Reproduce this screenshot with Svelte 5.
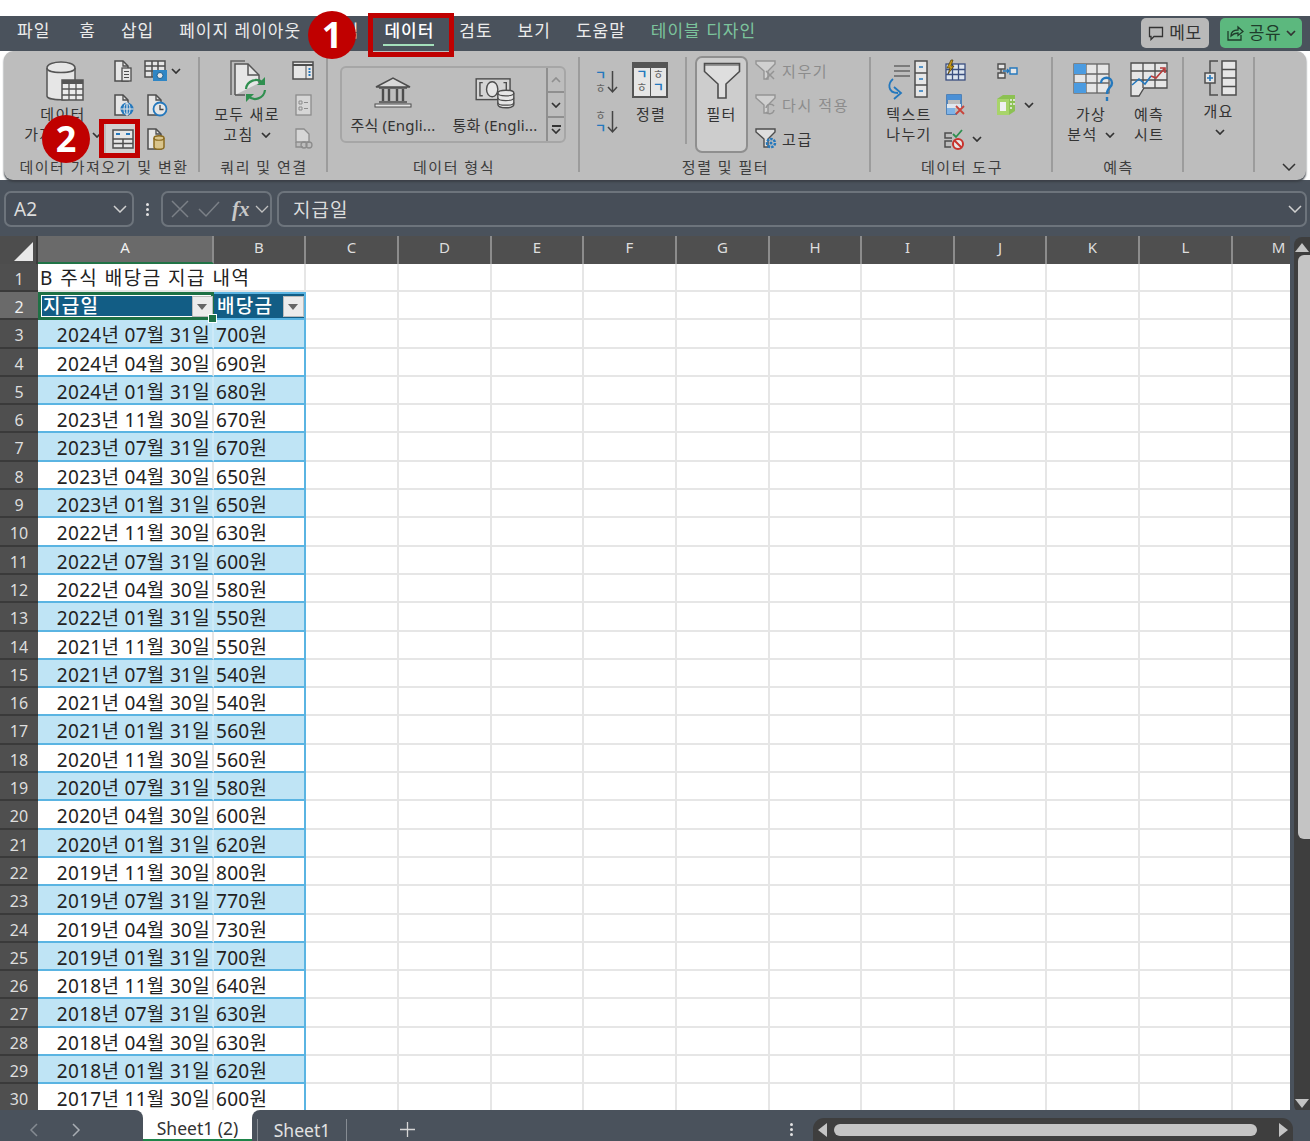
<script>
  // Excel data tab screenshot: ribbon, formula bar, sheet grid and tab strip
  const tabs = ['파일', '홈', '삽입', '페이지 레이아웃', '수식', '데이터', '검토', '보기', '도움말', '테이블 디자인']
  const columns = ['A', 'B', 'C', 'D', 'E', 'F', 'G', 'H', 'I', 'J', 'K', 'L', 'M']
  const emptyColumns = columns.slice(2)

  const payments = [
    ['2024년 07월 31일', '700원'], ['2024년 04월 30일', '690원'], ['2024년 01월 31일', '680원'],
    ['2023년 11월 30일', '670원'], ['2023년 07월 31일', '670원'], ['2023년 04월 30일', '650원'],
    ['2023년 01월 31일', '650원'], ['2022년 11월 30일', '630원'], ['2022년 07월 31일', '600원'],
    ['2022년 04월 30일', '580원'], ['2022년 01월 31일', '550원'], ['2021년 11월 30일', '550원'],
    ['2021년 07월 31일', '540원'], ['2021년 04월 30일', '540원'], ['2021년 01월 31일', '560원'],
    ['2020년 11월 30일', '560원'], ['2020년 07월 31일', '580원'], ['2020년 04월 30일', '600원'],
    ['2020년 01월 31일', '620원'], ['2019년 11월 30일', '800원'], ['2019년 07월 31일', '770원'],
    ['2019년 04월 30일', '730원'], ['2019년 01월 31일', '700원'], ['2018년 11월 30일', '640원'],
    ['2018년 07월 31일', '630원'], ['2018년 04월 30일', '630원'], ['2018년 01월 31일', '620원'],
    ['2017년 11월 30일', '600원']
  ]
</script>

{#snippet chev()}
  <svg class="chev" width="10" height="6" viewBox="0 0 10 6"><path d="M1 1l4 4 4-4" fill="none" stroke="#333" stroke-width="1.7"/></svg>
{/snippet}

{#snippet page(x = 0, y = 0)}
  <path transform="translate({x} {y})" d="M1 1h8l5 5v15H1z" fill="#e6e6e6" stroke="#4d4d4d" stroke-width="1.5"/>
  <path transform="translate({x} {y})" d="M9 1v5h5" fill="none" stroke="#4d4d4d" stroke-width="1.3"/>
{/snippet}

{#snippet arrow()}
  <svg class="sort-arrow" width="11" height="24" viewBox="0 0 11 24"><path d="M5.500 1v21M1 17l4.500 5 4.500-5" fill="none" stroke="#444" stroke-width="1.500"/></svg>
{/snippet}

<div class="window">
  <nav class="tabs">
    {#each tabs as tab}
      <span class="tab" class:active={tab === '데이터'} class:context={tab === '테이블 디자인'}>{tab}</span>
    {/each}
    <div class="tab-actions">
      <button class="memo">
        <svg width="16" height="16" viewBox="0 0 16 16"><path d="M1.5 2.5h13v9H6l-3 3v-3H1.5z" fill="none" stroke="#333" stroke-width="1.3"/></svg>
        메모
      </button>
      <button class="share">
        <svg width="18" height="18" viewBox="0 0 18 18"><path d="M2 7v9h13v-5M5 12c0-4 3-6 7-6V3l5 4.500-5 4V9c-3 0-5 1-7 3z" fill="none" stroke="#1f3d2b" stroke-width="1.3"/></svg>
        공유
        {@render chev()}
      </button>
    </div>
  </nav>

  <section class="ribbon">
    <div class="group g-import">
      <div class="body">
        <div class="big import-btn">
          <svg width="40" height="44" viewBox="0 0 40 44">
            <path d="M1 8c0-8 28-8 28 0v28c0 5-28 5-28 0z" fill="#e6e6e6" stroke="#555" stroke-width="1.5"/>
            <path d="M1 8c0 6 28 6 28 0" fill="none" stroke="#555" stroke-width="1.5"/>
            <rect x="16" y="20" width="21" height="20" fill="#ececec" stroke="#555" stroke-width="1.5"/>
            <path d="M16 20h21v4H16z" fill="#555"/>
            <path d="M23 24v16M30 24v16M16 29h21M16 35h21" stroke="#555" stroke-width="1.3"/>
          </svg>
          <span class="line">데이터</span>
          <span class="line">가져오기 {@render chev()}</span>
        </div>
        <div class="small-grid import-grid">
          <span class="cell">
            <svg width="24" height="24" viewBox="0 0 24 24">
              {@render page(3, 1)}
              <rect x="11" y="9" width="9" height="13" fill="#e6e6e6" stroke="#4d4d4d" stroke-width="1.3"/>
              <path d="M13 12.500h5M13 15.500h5M13 18.500h5" stroke="#4d4d4d"/>
            </svg>
          </span>
          <span class="cell wide">
            <svg width="26" height="24" viewBox="0 0 26 24">
              <rect x="2" y="2" width="20" height="16" fill="#e6e6e6" stroke="#4d4d4d" stroke-width="1.5"/>
              <path d="M2 7h20M2 12h20M9 2v16M15 2v16" stroke="#4d4d4d" stroke-width="1.5"/>
              <rect x="10" y="11" width="14" height="11" fill="#2f86c5"/>
              <circle cx="17" cy="16.500" r="3" fill="#e6e6e6" stroke="#1d5f90"/>
            </svg>
            {@render chev()}
          </span>
          <span class="cell">
            <svg width="24" height="24" viewBox="0 0 24 24">
              {@render page(3, 1)}
              <circle cx="16" cy="16" r="6.500" fill="#2478bd"/>
              <path d="M9.500 16h13M16 9.500v13" stroke="#e8e8e8" stroke-width="1.200"/>
              <ellipse cx="16" cy="16" rx="3" ry="6" fill="none" stroke="#e8e8e8"/>
            </svg>
          </span>
          <span class="cell">
            <svg width="24" height="24" viewBox="0 0 24 24">
              {@render page(3, 1)}
              <circle cx="16" cy="16" r="6.500" fill="#e6e6e6" stroke="#2478bd" stroke-width="1.800"/>
              <path d="M16 12v4.500h3.500" fill="none" stroke="#444" stroke-width="1.300"/>
            </svg>
          </span>
          <span class="cell picked">
            <svg width="24" height="24" viewBox="0 0 24 24">
              <rect x="2" y="3" width="20" height="18" fill="#e6e6e6" stroke="#4d4d4d" stroke-width="1.5"/>
              <path d="M2 12h20M2 16.500h20M12 12v9" stroke="#4d4d4d" stroke-width="1.5"/>
              <path d="M5 7h4M15 7h4" stroke="#2478bd" stroke-width="2"/>
            </svg>
          </span>
          <span class="cell">
            <svg width="24" height="24" viewBox="0 0 24 24">
              {@render page(3, 1)}
              <path d="M10 11c0-3 10-3 10 0v9c0 3-10 3-10 0z" fill="#d9c48c" stroke="#8a6a1e" stroke-width="1.500"/>
              <path d="M10 11c0 3 10 3 10 0" fill="none" stroke="#8a6a1e" stroke-width="1.200"/>
            </svg>
          </span>
        </div>
      </div>
      <div class="group-label">데이터 가져오기 및 변환</div>
    </div>

    <div class="group g-query">
      <div class="body">
        <div class="big refresh-btn">
          <svg width="44" height="44" viewBox="0 0 44 44">
            <path d="M3 36V2h14" fill="none" stroke="#666" stroke-width="1.500"/>
            <path d="M7 36V5h13l11 11v8" fill="#e6e6e6" stroke="#555" stroke-width="1.500"/>
            <path d="M7 36h10" stroke="#555" stroke-width="1.500"/>
            <path d="M20 5v11h11" fill="none" stroke="#555" stroke-width="1.500"/>
            <path d="M18 30a10 10 0 0 1 17-6M37 31a10 10 0 0 1-17 6" fill="none" stroke="#2f8f4f" stroke-width="2.200"/>
            <path d="M37 18v8h-8zM18 43v-8h8z" fill="#2f8f4f"/>
          </svg>
          <span class="line">모두 새로</span>
          <span class="line">고침 {@render chev()}</span>
        </div>
        <div class="small-col">
          <span class="cell">
            <svg width="24" height="24" viewBox="0 0 24 24">
              <rect x="2" y="3" width="20" height="17" fill="#e6e6e6" stroke="#4d4d4d" stroke-width="1.500"/>
              <path d="M2 6h20" stroke="#4d4d4d" stroke-width="2"/>
              <path d="M15 6v14" stroke="#4d4d4d"/>
              <path d="M18.500 9v8" stroke="#2478bd" stroke-width="2" stroke-dasharray="2 1"/>
            </svg>
          </span>
          <span class="cell">
            <svg width="24" height="24" viewBox="0 0 24 24">
              <rect x="5" y="2" width="15" height="20" fill="#d6d6d6" stroke="#8c8c8c" stroke-width="1.300"/>
              <path d="M8 8h3v3H8zM8 14h3v3H8zM13 9.500h4M13 15.500h4" fill="none" stroke="#8c8c8c"/>
            </svg>
          </span>
          <span class="cell">
            <svg width="24" height="24" viewBox="0 0 24 24">
              <path d="M5 2h8l5 5v8H5z" fill="#d6d6d6" stroke="#8c8c8c" stroke-width="1.300"/>
              <path d="M5 15v5h7" fill="none" stroke="#8c8c8c" stroke-width="1.300"/>
              <circle cx="13" cy="18" r="3" fill="none" stroke="#8c8c8c" stroke-width="1.300"/>
              <circle cx="18" cy="18" r="3" fill="none" stroke="#8c8c8c" stroke-width="1.300"/>
            </svg>
          </span>
        </div>
      </div>
      <div class="group-label">쿼리 및 연결</div>
    </div>

    <div class="group g-types">
      <div class="body">
        <div class="gallery">
          <div class="gallery-item">
            <svg width="38" height="32" viewBox="0 0 38 32">
              <path d="M2 10L19 1l17 9z" fill="#d9d9d9" stroke="#4d4d4d" stroke-width="1.500"/>
              <path d="M5 11h28M5 25h28" stroke="#4d4d4d" stroke-width="1.500"/>
              <path d="M9 12v12M15 12v12M23 12v12M29 12v12" stroke="#4d4d4d" stroke-width="2.400"/>
              <rect x="1" y="27" width="36" height="3" fill="#e6e6e6" stroke="#4d4d4d"/>
            </svg>
            <span>주식 (Engli...</span>
          </div>
          <div class="gallery-item">
            <svg width="42" height="34" viewBox="0 0 42 34">
              <rect x="1" y="2" width="36" height="22" fill="#d4d4d4" stroke="#4d4d4d" stroke-width="1.500"/>
              <ellipse cx="18" cy="13" rx="6" ry="8" fill="#e6e6e6" stroke="#4d4d4d" stroke-width="1.500"/>
              <path d="M8 6H5v14h3M30 6h3v14h-3" fill="none" stroke="#4d4d4d" stroke-width="1.500"/>
              <path d="M24 17c0-4 17-4 17 0v12c0 5-17 5-17 0z" fill="#e6e6e6" stroke="#4d4d4d" stroke-width="1.500"/>
              <path d="M24 17c0 4 17 4 17 0M24 22c0 4 17 4 17 0M24 27c0 4 17 4 17 0" fill="none" stroke="#4d4d4d" stroke-width="1.300"/>
            </svg>
            <span>통화 (Engli...</span>
          </div>
          <div class="gallery-btns">
            <span class="off"><svg width="10" height="6" viewBox="0 0 10 6"><path d="M1 5l4-4 4 4" fill="none" stroke="#8f8f8f" stroke-width="1.700"/></svg></span>
            <span>{@render chev()}</span>
            <span class="more"><i></i>{@render chev()}</span>
          </div>
        </div>
      </div>
      <div class="group-label">데이터 형식</div>
    </div>

    <div class="group g-sort">
      <div class="body">
        <div class="sort-col">
          <span class="sort-mini"><span class="stack"><span class="blue">ㄱ</span><span>ㅎ</span></span>{@render arrow()}</span>
          <span class="sort-mini"><span class="stack"><span>ㅎ</span><span class="blue">ㄱ</span></span>{@render arrow()}</span>
        </div>
        <div class="big sort-btn">
          <div class="sort-big">
            <span><i class="blue">ㄱ</i><i>ㅎ</i></span>
            <span><i>ㅎ</i><i class="blue">ㄱ</i></span>
          </div>
          <span class="line">정렬</span>
        </div>
        <i class="divider"></i>
        <div class="big filter-btn">
          <svg width="38" height="38" viewBox="0 0 38 38">
            <path d="M1.500 1.500h35v8L23 22v14h-8V22L1.500 9.500z" fill="#dedede" stroke="#4d4d4d" stroke-width="1.600"/>
            <path d="M2 3h34" stroke="#4d4d4d"/>
          </svg>
          <span class="line">필터</span>
        </div>
        <div class="filter-list">
          <span class="row off">
            <svg width="24" height="24" viewBox="0 0 24 24">
              <path d="M2 3h19v3l-7 7v8h-4v-8L2 6z" fill="#d0d0d0" stroke="#949494" stroke-width="1.400"/>
              <path d="M12 13l8 8M20 13l-8 8" stroke="#949494" stroke-width="1.500"/>
            </svg>
            지우기
          </span>
          <span class="row off">
            <svg width="24" height="24" viewBox="0 0 24 24">
              <path d="M2 3h19v3l-7 7v8h-4v-8L2 6z" fill="#d0d0d0" stroke="#949494" stroke-width="1.400"/>
              <path d="M12 16a4.500 4.500 0 0 1 8-2M20 18a4.500 4.500 0 0 1-8 2" fill="none" stroke="#949494" stroke-width="1.500"/>
            </svg>
            다시 적용
          </span>
          <span class="row">
            <svg width="24" height="24" viewBox="0 0 24 24">
              <path d="M2 3h19v3l-7 7v8h-4v-8L2 6z" fill="#dedede" stroke="#4d4d4d" stroke-width="1.400"/>
              <circle cx="17" cy="17" r="4" fill="none" stroke="#2478bd" stroke-width="2.500" stroke-dasharray="2.500 1"/>
              <circle cx="17" cy="17" r="1.500" fill="#2478bd"/>
            </svg>
            고급
          </span>
        </div>
      </div>
      <div class="group-label">정렬 및 필터</div>
    </div>

    <div class="group g-tools">
      <div class="body">
        <div class="big split-btn">
          <svg width="46" height="42" viewBox="0 0 46 42">
            <path d="M8 6h16M8 11h16M8 16h16" stroke="#666" stroke-width="1.300"/>
            <rect x="29" y="1" width="12" height="36" fill="#e6e6e6" stroke="#4d4d4d" stroke-width="1.500"/>
            <path d="M29 13h12M29 25h12" stroke="#4d4d4d" stroke-width="1.500"/>
            <path d="M33 7h4M33 19h4M33 31h4" stroke="#2478bd" stroke-width="1.600"/>
            <path d="M7 19C2 23 1 33 12 33M8 27l7 6-7 6" fill="none" stroke="#2478bd" stroke-width="1.800"/>
          </svg>
          <span class="line">텍스트</span>
          <span class="line">나누기</span>
        </div>
        <div class="small-grid tools-grid">
          <span class="cell">
            <svg width="24" height="24" viewBox="0 0 24 24">
              <rect x="3" y="5" width="19" height="16" fill="#dce4ee" stroke="#3b4f80" stroke-width="1.300"/>
              <path d="M3 10.500h19M3 15.500h19M9.500 5v16M15.500 5v16" stroke="#3b4f80" stroke-width="1.300"/>
              <path d="M8 1L4 9h3l-2 6 6-8H8l2-6z" fill="#c79a1c" stroke="#4d3a00" stroke-width=".7"/>
            </svg>
          </span>
          <span class="cell">
            <svg width="24" height="24" viewBox="0 0 24 24">
              <path d="M4 16v5h10M4 16V2h14v12" fill="none" stroke="#2c6fb5" stroke-width="1.500"/>
              <rect x="4" y="2" width="14" height="5" fill="#4b90d6"/>
              <rect x="4" y="11" width="14" height="4" fill="#dfe7ef"/>
              <rect x="4" y="15" width="8" height="6" fill="#7fb3e6"/>
              <path d="M13 13l8 8M21 13l-8 8" stroke="#c8443c" stroke-width="1.800"/>
            </svg>
          </span>
          <span class="cell wide">
            <svg width="24" height="24" viewBox="0 0 24 24">
              <path d="M10 6H3v5h7M10 14H3v6h6" fill="none" stroke="#4d4d4d" stroke-width="1.500"/>
              <path d="M11 7l3 3 6-7" fill="none" stroke="#2f8f4f" stroke-width="1.800"/>
              <circle cx="16" cy="17" r="5" fill="#e6e6e6" stroke="#c8322c" stroke-width="2"/>
              <path d="M12.500 13.500l7 7" stroke="#c8322c" stroke-width="2"/>
            </svg>
            {@render chev()}
          </span>
        </div>
        <div class="small-col tools-col">
          <span class="cell">
            <svg width="24" height="24" viewBox="0 0 24 24">
              <path d="M3 5h7v5H3zM3 14h7v5H3z" fill="#e6e6e6" stroke="#4d4d4d" stroke-width="1.400"/>
              <path d="M6 10v4" stroke="#4d4d4d" stroke-width="1.400"/>
              <path d="M8 12h6M12 10l2 2-2 2" fill="none" stroke="#2478bd" stroke-width="1.300"/>
              <path d="M15 9h7v6h-7z" fill="#e6e6e6" stroke="#2478bd" stroke-width="1.400"/>
            </svg>
          </span>
          <span class="cell wide">
            <svg width="24" height="24" viewBox="0 0 24 24">
              <path d="M3 6l6-4h12v16l-6 4H3z" fill="#8cc152"/>
              <path d="M3 6h12v16H3z" fill="#a8d46a"/>
              <rect x="6" y="9" width="6" height="9" fill="#f0f0f0"/>
              <path d="M17 6v2M20 6v2M17 10v2M20 10v2M17 14v2" stroke="#f0f0f0" stroke-width="1.500"/>
            </svg>
            {@render chev()}
          </span>
        </div>
      </div>
      <div class="group-label">데이터 도구</div>
    </div>

    <div class="group g-forecast">
      <div class="body">
        <div class="big whatif-btn">
          <svg width="42" height="42" viewBox="0 0 42 42">
            <rect x="1" y="2" width="35" height="29" fill="#e6e6e6" stroke="#666" stroke-width="1.300"/>
            <path d="M13 2v29M24 2v29M1 12h35M1 21h35" stroke="#666" stroke-width="1.300"/>
            <rect x="1" y="2" width="12" height="10" fill="#4b9be0"/>
            <rect x="1" y="21" width="12" height="10" fill="#4b9be0"/>
            <path d="M28 21c0-7 11-7 11 0 0 5-5 4-5 11" fill="none" stroke="#2478bd" stroke-width="2.400"/>
            <path d="M34 35v4" stroke="#2478bd" stroke-width="2.400"/>
          </svg>
          <span class="line">가상</span>
          <span class="line">분석 {@render chev()}</span>
        </div>
        <div class="big forecast-btn">
          <svg width="38" height="36" viewBox="0 0 38 36">
            <path d="M1 1h36v25H14l-5 8H1z" fill="#e6e6e6" stroke="#4d4d4d" stroke-width="1.300"/>
            <path d="M13 1v25M25 1v25M1 9h36M1 18h36" stroke="#4d4d4d" stroke-width="1.300"/>
            <path d="M2 23l7-6 6 5 6-8" fill="none" stroke="#2478bd" stroke-width="1.600"/>
            <path d="M21 14l5 2 8-9M30 6h5v5" fill="none" stroke="#b83a3a" stroke-width="1.600"/>
          </svg>
          <span class="line">예측</span>
          <span class="line">시트</span>
        </div>
      </div>
      <div class="group-label">예측</div>
    </div>

    <div class="group g-outline">
      <div class="body">
        <div class="big outline-btn">
          <svg width="34" height="36" viewBox="0 0 34 36">
            <path d="M14 1H6v12M6 23v12h8" fill="none" stroke="#4d4d4d" stroke-width="1.500"/>
            <rect x="1" y="13" width="10" height="10" fill="#e6e6e6" stroke="#4d4d4d" stroke-width="1.500"/>
            <path d="M6 15v6M3 18h6" stroke="#2478bd" stroke-width="1.600"/>
            <rect x="18" y="1" width="14" height="34" fill="#e6e6e6" stroke="#4d4d4d" stroke-width="1.500"/>
            <path d="M18 9.500h14M18 18h14M18 26.500h14" stroke="#4d4d4d" stroke-width="1.500"/>
          </svg>
          <span class="line">개요</span>
          <span class="line">{@render chev()}</span>
        </div>
      </div>
    </div>

    <button class="collapse" aria-label="리본 축소">
      <svg width="14" height="8" viewBox="0 0 14 8"><path d="M1 1l6 6 6-6" fill="none" stroke="#333" stroke-width="1.500"/></svg>
    </button>
  </section>

  <div class="formula-bar">
    <div class="name-box">A2
      <svg width="14" height="8" viewBox="0 0 14 8"><path d="M1 1l6 6 6-6" fill="none" stroke="#d0d0d0" stroke-width="1.500"/></svg>
    </div>
    <span class="grip"><i></i><i></i><i></i></span>
    <div class="fx-box">
      <svg width="20" height="20" viewBox="0 0 20 20"><path d="M2 2l16 16M18 2L2 18" stroke="#7b8087" stroke-width="1.500"/></svg>
      <svg width="22" height="20" viewBox="0 0 22 20"><path d="M1 10l7 7L21 3" fill="none" stroke="#7b8087" stroke-width="1.500"/></svg>
      <span class="fx">fx</span>
      <svg width="14" height="8" viewBox="0 0 14 8"><path d="M1 1l6 6 6-6" fill="none" stroke="#c0c0c0" stroke-width="1.300"/></svg>
    </div>
    <div class="formula-input">지급일
      <svg width="14" height="8" viewBox="0 0 14 8"><path d="M1 1l6 6 6-6" fill="none" stroke="#d0d0d0" stroke-width="1.500"/></svg>
    </div>
  </div>

  <div class="workspace">
    <div class="sheet">
      <div class="corner"><i></i></div>
      {#each columns as col}
        <div class="col-head" class:sel={col === 'A'}>{col}</div>
      {/each}

      <div class="row-head">1</div>
      <div class="c title">B 주식 배당금 지급 내역</div>
      <div class="c"></div>
      {#each emptyColumns as col}<div class="c"></div>{/each}

      <div class="row-head sel">2</div>
      <div class="c th first">지급일<span class="drop"></span><i class="handle"></i></div>
      <div class="c th">배당금<span class="drop"></span></div>
      {#each emptyColumns as col}<div class="c"></div>{/each}

      {#each payments as [date, amount], i}
        <div class="row-head">{i + 3}</div>
        <div class="c date" class:band={i % 2 === 0}>{date}</div>
        <div class="c amount" class:band={i % 2 === 0}>{amount}</div>
        {#each emptyColumns as col}<div class="c"></div>{/each}
      {/each}
    </div>

    <div class="vscroll">
      <svg width="14" height="9" viewBox="0 0 14 9"><path d="M7 0l7 9H0z" fill="#c4c4c4"/></svg>
      <span class="vthumb"></span>
      <svg width="14" height="9" viewBox="0 0 14 9"><path d="M7 9l7-9H0z" fill="#c4c4c4"/></svg>
    </div>
  </div>

  <footer class="sheet-tabs">
    <div class="tab-nav">
      <svg width="10" height="14" viewBox="0 0 10 14"><path d="M8 1L2 7l6 6" fill="none" stroke="#858b92" stroke-width="1.500"/></svg>
      <svg width="10" height="14" viewBox="0 0 10 14"><path d="M2 1l6 6-6 6" fill="none" stroke="#a8adb3" stroke-width="1.500"/></svg>
    </div>
    <div class="sheet-active">Sheet1 (2)</div>
    <div class="tab-rest">
      <span class="sheet-other">Sheet1</span>
      <svg class="plus" width="15" height="15" viewBox="0 0 15 15"><path d="M7.500 0v15M0 7.500h15" stroke="#d6d6d6" stroke-width="1.300"/></svg>
      <span class="grip bottom"><i></i><i></i><i></i></span>
      <div class="hscroll">
        <svg width="9" height="14" viewBox="0 0 9 14"><path d="M0 7l9-7v14z" fill="#c4c4c4"/></svg>
        <span class="hthumb"></span>
        <svg width="9" height="14" viewBox="0 0 9 14"><path d="M9 7L0 0v14z" fill="#c4c4c4"/></svg>
      </div>
    </div>
  </footer>

  <!-- callouts drawn over the screenshot -->
  <span class="mark mark-tab"></span>
  <span class="mark mark-icon"></span>
  <span class="badge badge-1">1</span>
  <span class="badge badge-2">2</span>
</div>

<style>
  :global(body) {
    background: #fff;
    font-family: "Noto Sans", "Noto Sans CJK KR", sans-serif;
  }

  .window {
    position: relative;
    width: 1310px;
    height: 1141px;
    padding-top: 16px;
    box-sizing: border-box;
    overflow: hidden;
    display: flex;
    flex-direction: column;
  }

  .tabs {
    height: 35px;
    flex: none;
    display: flex;
    align-items: center;
    gap: 25px;
    padding: 0 8px 6px 17px;
    box-sizing: border-box;
    background: #4a525c;
    color: #ececec;
    font-size: 17px;
    line-height: 24px;
    letter-spacing: 1px;
  }

  .tab {
    position: relative;
    white-space: nowrap;
  }

  .tab:first-child {
    margin-right: 4px;
  }

  .tab.active {
    color: #fff;
    font-weight: 500;
  }

  .tab.active::after {
    content: '';
    position: absolute;
    left: -1px;
    right: 0;
    bottom: -3px;
    height: 2px;
    background: #a3dfbb;
  }

  .tab.context {
    color: #7cc49c;
  }

  .tab-actions {
    margin-left: auto;
    margin-top: 5px;
    display: flex;
    gap: 11px;
  }

  .tab-actions button {
    height: 30px;
    border: 0;
    border-radius: 5px;
    display: flex;
    align-items: center;
    justify-content: center;
    gap: 5px;
    padding: 0;
    font: inherit;
    letter-spacing: 0.6px;
    color: #333;
  }

  .memo {
    width: 68px;
    background: #b9b9b9;
  }

  .share {
    width: 82px;
    background: #5cb87e;
    color: #1f3d2b !important;
  }

  .ribbon {
    height: 129px;
    flex: none;
    margin: 0 4px;
    display: flex;
    background: #bdbdbd;
    border-radius: 9px;
    color: #333;
    font-size: 15px;
    box-shadow: 0 2px 2px #3b4047;
    position: relative;
  }

  .group {
    flex: none;
    display: flex;
    flex-direction: column;
    box-sizing: border-box;
    position: relative;
  }

  .group::after {
    content: '';
    position: absolute;
    right: 0;
    top: 6px;
    bottom: 8px;
    width: 2px;
    background: #9c9c9c;
  }

  .g-import { width: 196px; }
  .g-query { width: 128px; }
  .g-types { width: 252px; }
  .g-sort { width: 291px; }
  .g-tools { width: 182px; }
  .g-forecast { width: 131px; }
  .g-outline { width: 71px; height: 129px; }

  .g-import .group-label {
    padding-left: 4px;
  }

  .body {
    height: 105px;
    display: flex;
    padding-top: 3px;
    box-sizing: border-box;
    position: relative;
  }

  .group-label {
    height: 22px;
    line-height: 22px;
    text-align: center;
    white-space: nowrap;
    letter-spacing: 1.5px;
    color: #3d3d3d;
  }

  .big {
    flex: none;
    display: flex;
    flex-direction: column;
    align-items: center;
    white-space: nowrap;
  }

  .big > svg:first-child {
    flex: none;
    height: 44px;
    margin: 5px 0 1px;
  }

  .big .chev {
    margin: 0 0 2px 2px;
  }

  .line {
    height: 20px;
    line-height: 20px;
    letter-spacing: 1.300px;
  }

  .cell {
    display: flex;
    align-items: center;
    justify-content: center;
    height: 34px;
    width: 33px;
    position: relative;
  }

  .cell.wide {
    justify-content: flex-start;
    gap: 2px;
    padding-left: 4px;
    box-sizing: border-box;
  }

  .cell.wide svg {
    flex: none;
  }

  .g-tools .cell.wide {
    gap: 6px;
  }

  .small-grid {
    display: grid;
    grid-template-columns: 33px 33px;
    grid-auto-rows: 34px;
  }

  .small-col {
    display: flex;
    flex-direction: column;
  }

  .import-btn {
    width: 76px;
    margin: 0 5px 0 21px;
  }

  .import-btn > svg:first-child {
    margin: 6px 0 0 6px;
  }

  .picked {
    background: #d2d2d2;
  }

  .refresh-btn {
    width: 82px;
    margin: 0 -2px 0 6px;
  }

  .refresh-btn > svg:first-child {
    margin-left: 6px;
  }

  .gallery {
    width: 226px;
    height: 77px;
    margin: 12px 0 0 12px;
    border: 2px solid #a6a6a6;
    border-radius: 6px;
    box-sizing: border-box;
    display: flex;
    position: relative;
  }

  .gallery-item {
    flex: none;
    width: 102px;
    display: flex;
    flex-direction: column;
    align-items: center;
    padding-top: 9px;
    box-sizing: border-box;
    white-space: nowrap;
    gap: 5px;
    font-size: 15px;
    letter-spacing: 0.2px;
    line-height: 22px;
  }

  .gallery-item svg {
    height: 32px;
    flex: none;
  }

  .gallery-btns {
    margin-left: auto;
    width: 18px;
    display: flex;
    flex-direction: column;
    border-left: 2px solid #8f8f8f;
  }

  .gallery-btns span {
    flex: 1;
    display: flex;
    flex-direction: column;
    align-items: center;
    justify-content: center;
    border-bottom: 2px solid #8f8f8f;
  }

  .gallery-btns span:last-child {
    border-bottom: 0;
  }

  .gallery-btns i {
    width: 9px;
    height: 2px;
    background: #333;
    margin-bottom: 1px;
  }

  .sort-col {
    width: 52px;
    display: flex;
    flex-direction: column;
    gap: 6px;
    padding: 11px 0 0 15px;
    box-sizing: border-box;
  }

  .sort-mini {
    display: flex;
    align-items: center;
    height: 34px;
    font-size: 12px;
    line-height: 13px;
    color: #666;
  }

  .stack {
    display: flex;
    flex-direction: column;
    width: 12px;
  }

  .sort-arrow {
    flex: none;
  }

  .blue {
    color: #2478bd;
    font-weight: 700;
  }

  .sort-btn {
    width: 38px;
  }

  .sort-big {
    flex: none;
    width: 36px;
    height: 36px;
    margin: 8px 2px 6px 0;
    background: #e6e6e6;
    border: 2px solid #555;
    border-top-width: 6px;
    box-sizing: border-box;
    display: flex;
  }

  .sort-big span {
    flex: 1;
    display: flex;
    flex-direction: column;
    align-items: center;
    font-size: 12px;
    line-height: 13px;
    color: #666;
  }

  .sort-big span + span {
    border-left: 1px solid #555;
  }

  .sort-big i {
    font-style: normal;
  }

  .divider {
    width: 2px;
    height: 87px;
    margin: 3px 8px 0 15px;
    background: #9c9c9c;
    flex: none;
  }

  .filter-btn {
    width: 53px;
    height: 97px;
    margin-top: 2px;
    border: 2px solid #8f8f8f;
    border-radius: 7px;
    background: #cdcdcd;
    box-sizing: border-box;
  }

  .filter-btn > svg:first-child {
    height: 38px;
    margin: 4px 0;
  }

  .filter-list {
    display: flex;
    flex-direction: column;
    margin: -1px 0 0 6px;
  }

  .filter-list .row {
    height: 34px;
    display: flex;
    align-items: center;
    gap: 4px;
    white-space: nowrap;
    letter-spacing: 1.600px;
  }

  .filter-list .off {
    color: #8c8c8c;
  }

  .split-btn {
    width: 48px;
    margin: 0 1px 0 14px;
  }

  .split-btn > svg:first-child {
    height: 42px;
    margin: 6px 0 2px;
  }

  .tools-col {
    margin-left: 19px;
  }

  .tools-grid {
    grid-template-columns: 33px;
    margin-left: 4px;
  }

  .whatif-btn {
    width: 58px;
    margin-left: 9px;
  }

  .whatif-btn > svg:first-child {
    height: 42px;
    margin: 8px 0 0 6px;
  }

  .forecast-btn {
    width: 48px;
    margin-left: 5px;
  }

  .forecast-btn > svg:first-child {
    height: 36px;
    margin: 8px 0 6px;
  }

  .outline-btn {
    width: 71px;
    padding-right: 2px;
    box-sizing: border-box;
  }

  .outline-btn > svg:first-child {
    height: 36px;
    margin: 6px 0 5px 4px;
  }

  .collapse {
    margin: auto 10px 9px auto;
    background: none;
    border: 0;
    padding: 0;
    line-height: 0;
  }

  .formula-bar {
    height: 56px;
    flex: none;
    display: flex;
    align-items: flex-start;
    padding: 11px 3px 0 4px;
    box-sizing: border-box;
    background: #4a525c;
    color: #dcdcdc;
    font-size: 19px;
  }

  .name-box,
  .fx-box,
  .formula-input {
    height: 36px;
    box-sizing: border-box;
    border: 2px solid #6d747c;
    border-radius: 7px;
    display: flex;
    align-items: center;
    background: #474e58;
  }

  .name-box {
    width: 130px;
    padding: 0 5px 0 8px;
    justify-content: space-between;
  }

  .grip {
    width: 27px;
    display: flex;
    flex-direction: column;
    align-items: center;
    justify-content: center;
    gap: 2px;
    height: 36px;
  }

  .grip i {
    width: 3px;
    height: 3px;
    background: #e2e2e2;
    border-radius: 50%;
  }

  .fx-box {
    width: 111px;
    gap: 8px;
    padding-left: 7px;
  }

  .fx {
    font-family: "Liberation Serif", serif;
    font-style: italic;
    font-weight: 700;
    font-size: 21px;
    color: #c8c8c8;
    margin-left: 4px;
    margin-right: -3px;
  }

  .formula-input {
    flex: 1;
    margin-left: 5px;
    padding: 0 3px 0 14px;
    justify-content: space-between;
    letter-spacing: 1px;
  }

  .workspace {
    flex: 1;
    min-height: 0;
    display: flex;
    background: #4a525c;
  }

  .sheet {
    width: 1290px;
    flex: none;
    overflow: hidden;
    display: grid;
    grid-template-columns: 38px 176px 92px 93px 93px 92px 93px 93px 92px 93px 92px 93px 93px 93px;
    grid-template-rows: 27.700px;
    grid-auto-rows: 28.300px;
    align-content: start;
    background: #fff;
  }

  .corner {
    background: #4d4d4d;
    position: relative;
    border-right: 2px solid #3a3a3a;
  }

  .corner i {
    position: absolute;
    right: 3px;
    bottom: 3px;
    border-left: 19px solid transparent;
    border-bottom: 19px solid #e8e8e8;
  }

  .col-head {
    background: #4f4f4f;
    color: #dedede;
    font-size: 15px;
    text-align: center;
    line-height: 23px;
    border-right: 2px solid #8c8c8c;
    box-sizing: border-box;
  }

  .col-head.sel {
    background: #6a6a6a;
    border-bottom: 2px solid #217346;
    color: #f0f0f0;
  }

  .row-head {
    background: #4f4f4f;
    color: #dedede;
    font-size: 16px;
    text-align: center;
    line-height: 26px;
    padding-top: 2px;
    border-bottom: 2px solid #3a3a3a;
    box-sizing: border-box;
  }

  .row-head.sel {
    background: #6a6a6a;
    color: #f0f0f0;
  }

  .c {
    position: relative;
    border-right: 2px solid #e6e6e6;
    border-bottom: 2px solid #e6e6e6;
    box-sizing: border-box;
    color: #222;
    font-size: 19px;
    white-space: nowrap;
    min-width: 0;
  }

  .title {
    padding: 1px 0 0 2px;
    border-right: 0;
    letter-spacing: 1.500px;
    line-height: 26px;
  }

  .th {
    background: #125d85;
    color: #fff;
    font-weight: 500;
    letter-spacing: 1.300px;
    border: 0;
    border-top: 2px solid #5ab4e2;
    border-bottom: 2px solid #5ab4e2;
    border-right: 2px solid #5ab4e2;
    padding-left: 3px;
    line-height: 24px;
  }

  .th.first {
    border: 3px solid #1e7145;
    outline: 1px solid #fff;
    outline-offset: -4px;
    padding-left: 2px;
    line-height: 22px;
  }

  .drop {
    position: absolute;
    right: 0;
    top: 2px;
    width: 21px;
    height: 21px;
    background: #ececec;
    border: 1px solid #bbb;
    box-sizing: border-box;
  }

  .first .drop {
    right: -2px;
    top: 1px;
  }

  .drop::after {
    content: '';
    position: absolute;
    left: 4px;
    top: 7px;
    border: 5px solid transparent;
    border-top: 6px solid #666;
    border-bottom: 0;
  }

  .handle {
    position: absolute;
    right: -6px;
    bottom: -6px;
    width: 7px;
    height: 7px;
    background: #1e7145;
    border: 1px solid #fff;
    z-index: 2;
  }

  .date,
  .amount {
    border-bottom-color: #5ab4e2;
    letter-spacing: 0.3px;
    line-height: 25px;
    padding-top: 3px;
  }

  .date {
    text-align: right;
    padding-right: 2px;
  }

  .amount {
    padding-left: 2px;
    border-right-color: #5ab4e2;
  }

  .band {
    background: #bfe4f5;
  }

  .date.band {
    border-right-color: #cdeaf8;
  }

  .vscroll {
    width: 16px;
    margin: 1px 0 -3px 4px;
    background: #3e3e3e;
    border-radius: 8px 0 0 8px;
    display: flex;
    flex-direction: column;
    align-items: center;
    padding: 6px 0 5px;
    box-sizing: border-box;
  }

  .vthumb {
    width: 12px;
    margin: 3px 0 auto 4px;
    height: 584px;
    background: #c4c4c4;
    border-radius: 6px 0 0 6px;
  }

  .sheet-tabs {
    height: 31px;
    flex: none;
    display: flex;
    background: #fff;
  }

  .tab-nav {
    width: 143px;
    flex: none;
    background: #4a525c;
    border-top-right-radius: 8px;
    display: flex;
    align-items: center;
    gap: 32px;
    padding: 8px 0 0 29px;
    box-sizing: border-box;
  }

  .sheet-active {
    width: 109px;
    flex: none;
    height: 31px;
    color: #333;
    font-size: 17.500px;
    text-align: center;
    line-height: 36px;
    box-sizing: border-box;
    border-bottom: 2px solid #1e8449;
  }

  .tab-rest {
    flex: 1;
    background: #4a525c;
    border-top-left-radius: 8px;
    display: flex;
    align-items: center;
    padding-top: 8px;
    box-sizing: border-box;
    color: #e2e2e2;
    font-size: 17.500px;
    position: relative;
  }

  .sheet-other {
    margin-left: 5px;
    width: 88px;
    text-align: center;
    border-left: 1px solid #868c93;
    border-right: 1px solid #868c93;
    line-height: 22px;
  }

  .plus {
    margin-left: 53px;
    flex: none;
  }

  .grip.bottom {
    position: absolute;
    left: 531px;
    top: 8px;
    width: 16px;
    height: 23px;
  }

  .hscroll {
    margin-left: auto;
    margin-right: 17px;
    width: 480px;
    height: 23px;
    background: #3e3e3e;
    border-radius: 11px 11px 0 0;
    display: flex;
    align-items: center;
    padding: 0 5px;
    box-sizing: border-box;
    justify-content: space-between;
  }

  .hthumb {
    width: 423px;
    height: 12px;
    margin: 0 auto 0 7px;
    background: #c4c4c4;
    border-radius: 6px;
  }

  .mark {
    position: absolute;
    box-sizing: border-box;
    border: 5px solid #c00000;
  }

  .mark-tab {
    left: 368px;
    top: 13px;
    width: 86px;
    height: 44px;
  }

  .mark-icon {
    left: 99px;
    top: 119px;
    width: 41px;
    height: 39px;
  }

  .badge {
    position: absolute;
    width: 48px;
    height: 48px;
    border-radius: 50%;
    background: #c00000;
    color: #fff;
    font-family: "Noto Sans", sans-serif;
    font-weight: 700;
    font-size: 36px;
    line-height: 48px;
    text-align: center;
  }

  .badge-1 {
    left: 308px;
    top: 11px;
  }

  .badge-2 {
    left: 42px;
    top: 115px;
  }
</style>
